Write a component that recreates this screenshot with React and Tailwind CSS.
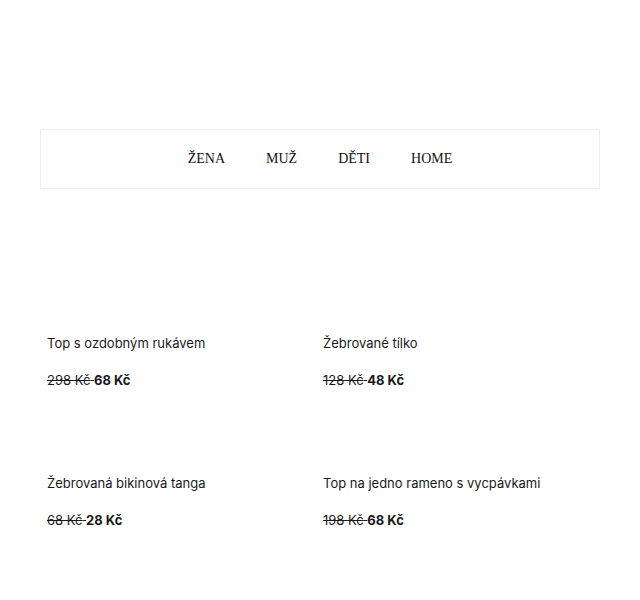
const navItems = ["ŽENA", "MUŽ", "DĚTI", "HOME"];

const products = [
  { name: "Top s ozdobným rukávem", oldPrice: "298 Kč", price: "68 Kč" },
  { name: "Žebrované tílko", oldPrice: "128 Kč", price: "48 Kč" },
  { name: "Žebrovaná bikinová tanga", oldPrice: "68 Kč", price: "28 Kč" },
  { name: "Top na jedno rameno s vycpávkami", oldPrice: "198 Kč", price: "68 Kč" },
];

function ProductCard({ product }) {
  return (
    <div className="px-[7px]">
      {/* image placeholder (empty in screenshot) */}
      <div className="h-[70px]" />
      <p className="text-[13px] leading-5 text-[#1a1a1a]">{product.name}</p>
      <p className="mt-[17px] text-[13px] leading-5 text-[#1a1a1a]">
        <span className="line-through">{product.oldPrice} </span>
        <span className="font-bold">{product.price}</span>
      </p>
    </div>
  );
}

export default function App() {
  return (
    <div className="min-h-[600px] bg-white px-10 pt-[129px] font-['Inter',sans-serif]">
      {/* Top nav */}
      <nav className="flex h-[60px] items-center justify-center gap-[41px] border border-[#eeeeee] pb-[2px]">
        {navItems.map((item) => (
          <a
            key={item}
            href="#"
            className="font-['Liberation_Serif',serif] text-[14px] text-[#111]"
          >
            {item}
          </a>
        ))}
      </nav>

      {/* Products */}
      <div className="mt-[74px] grid grid-cols-[276px_276px] gap-y-[13px]">
        {products.map((p) => (
          <ProductCard key={p.name} product={p} />
        ))}
      </div>
    </div>
  );
}
